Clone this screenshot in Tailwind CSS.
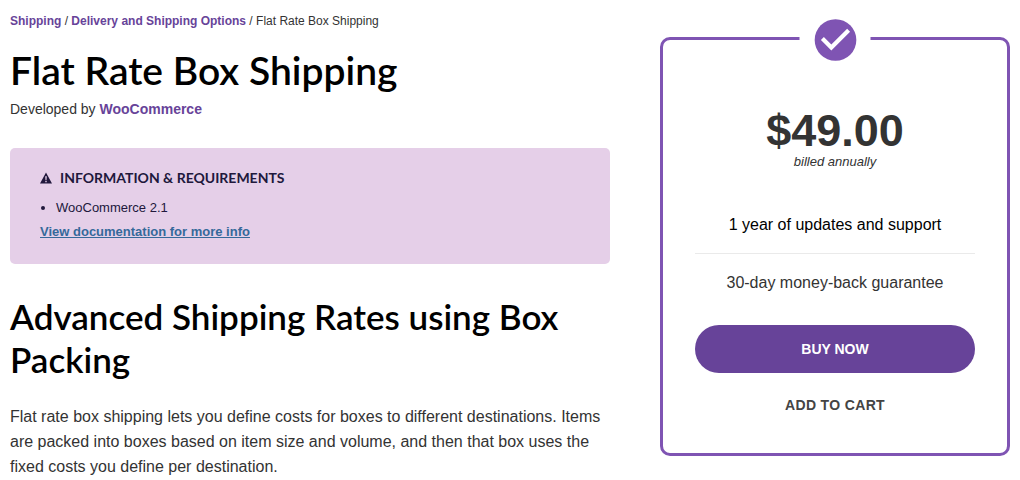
<!DOCTYPE html>
<html lang="en">
<head>
  <meta charset="UTF-8">
  <meta name="viewport" content="width=device-width, initial-scale=1.0">
  <title>Flat Rate Box Shipping - WooCommerce</title>
  <script src="https://cdn.jsdelivr.net/npm/@tailwindcss/browser@4"></script>
</head>
<body class="bg-white font-['Liberation_Sans',Arial,sans-serif] text-[#333]">
  <div class="flex items-start gap-[50px] px-[10px]">
    <main class="min-w-0 flex-1 pt-3">
      <nav aria-label="Breadcrumb" class="text-[12px] leading-[18px]">
        <a href="#" class="font-bold text-[#674399]">Shipping</a> /
        <a href="#" class="font-bold text-[#674399]">Delivery and Shipping Options</a> /
        <span>Flat Rate Box Shipping</span>
      </nav>
      <h1 class="mt-4 font-['Lato',sans-serif] text-[39px] leading-[48px] font-semibold text-black">Flat Rate Box Shipping</h1>
      <p class="mt-[6px] text-[14px] leading-[18px]">Developed by <a href="#" class="font-bold text-[#674399]">WooCommerce</a></p>

      <section class="mt-[30px] rounded-[5px] bg-[#e5cfe8] px-[30px] py-5 text-[13px] leading-6 text-[#21183c]">
        <h2 class="flex items-center gap-2 font-['Lato',sans-serif] text-[14px] leading-5 font-bold">
          <svg class="h-3 w-3" viewBox="0 0 12 12" aria-hidden="true">
            <path fill="currentColor" fill-rule="evenodd" d="M6 0.5 12 11.5H0zM5.2 4.2 5.5 8h1l.3-3.8zM5.3 8.8v1.4h1.4V8.8z"/>
          </svg>
          INFORMATION &amp; REQUIREMENTS
        </h2>
        <ul class="mt-2 list-disc pl-4">
          <li>WooCommerce 2.1</li>
        </ul>
        <a href="#" class="font-bold text-[#35699a] underline">View documentation for more info</a>
      </section>

      <h2 class="mt-[31px] font-['Lato',sans-serif] text-[35px] leading-[43px] font-semibold text-black">Advanced Shipping Rates using Box Packing</h2>
      <p class="mt-[23px] text-[16px] leading-[25px]">Flat rate box shipping lets you define costs for boxes to different destinations. Items are packed into boxes based on item size and volume, and then that box uses the fixed costs you define per destination.</p>
    </main>

    <aside class="relative mt-[37px] w-[350px] shrink-0 rounded-[10px] border-3 border-[#7f54b3] px-8 pt-[66px] pb-6 text-center">
      <!-- badge cutting through the top border -->
      <div class="absolute -top-[25px] left-1/2 flex w-[71px] -translate-x-1/2 justify-center bg-white">
        <svg class="h-[50px] w-[50px]" viewBox="0 0 24 24" aria-hidden="true">
          <circle cx="12" cy="12" r="10" fill="#7f54b3"/>
          <path fill="#fff" d="M10 17l-5-5 1.41-1.41L10 14.17l7.59-7.59L19 8z"/>
        </svg>
      </div>
      <p class="text-[45px] leading-[50px] font-bold">$49.00</p>
      <p class="text-[13px] leading-3 italic">billed annually</p>
      <ul class="mt-7 text-[16px] leading-[25px]">
        <li class="border-b border-[#eaeaea] py-4 text-black">1 year of updates and support</li>
        <li class="py-4">30-day money-back guarantee</li>
      </ul>
      <button type="button" class="mt-[14px] block h-12 w-full rounded-full bg-[#674399] text-[14px] font-bold text-white">BUY NOW</button>
      <button type="button" class="mt-2 block h-12 w-full text-[14px] font-bold tracking-wide text-[#444]">ADD TO CART</button>
    </aside>
  </div>
</body>
</html>
